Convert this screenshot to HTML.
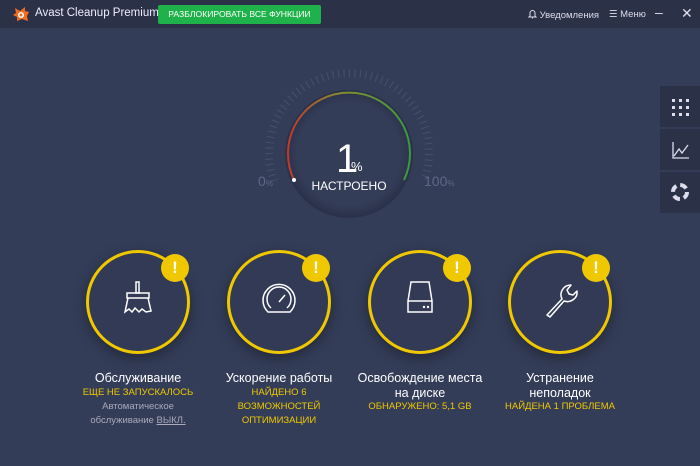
<!DOCTYPE html>
<html><head><meta charset="utf-8"><style>
*{margin:0;padding:0;box-sizing:border-box}
body{width:700px;height:466px;overflow:hidden;background:#343d58;font-family:"Liberation Sans",sans-serif;position:relative;color:#fff}
.hdr{position:absolute;left:0;top:0;width:700px;height:28px;background:#2b3146}
.logo{position:absolute;left:12px;top:6px}
.title{position:absolute;left:35px;top:7px;font-size:11.5px;color:#eef;white-space:nowrap}
.btn{position:absolute;left:158px;top:5px;width:163px;height:19px;background:#1fb24a;border-radius:2px;font-size:8.6px;color:#fff;text-align:center;line-height:19px;white-space:nowrap}
.r{position:absolute;top:9px;font-size:9.5px;color:#dde;white-space:nowrap}
.side{position:absolute;left:660px;width:40px;height:41px;background:#2b3147}
.c{position:absolute;width:104px;height:104px;border-radius:50%;border:3px solid #f0c800;background:#323a55;box-shadow:0 4px 14px rgba(0,0,0,.35)}
.b{position:absolute;width:28px;height:28px;border-radius:50%;background:#f0c800;color:#fff;font-weight:bold;font-size:17px;text-align:center;line-height:28px}
.t{position:absolute;width:160px;text-align:center;font-size:12.5px;line-height:15px;color:#fff}
.y{color:#f0c800;font-size:9.5px;line-height:14px}
.g{color:#aab;font-size:9.5px;line-height:14px}
</style></head><body>
<div class="hdr">
<svg class="logo" width="18" height="16" viewBox="0 0 18 16"><path d="M3 2 L8 5 L13 1 L13 5 L17 6 L15 10 L16 15 L10 13 L5 15 L5 11 L1 9 L4 7Z" fill="#f26b21"/><circle cx="9" cy="9" r="3" fill="#fff"/><circle cx="9" cy="9" r="1.5" fill="#f26b21"/></svg>
<div class="title">Avast Cleanup Premium</div>
<div class="btn">РАЗБЛОКИРОВАТЬ ВСЕ ФУНКЦИИ</div>
<div class="r" style="left:528px"><svg width="9" height="10" style="vertical-align:-1px"><path d="M2 7 V4 A2.5 2.5 0 0 1 7 4 V7 L8 8 H1 Z M4 9 H5" stroke="#dde" fill="none"/></svg> Уведомления</div>
<div class="r" style="left:609px">☰ Меню</div>
<div class="r" style="left:655px;top:4px;font-size:14px">–</div>
<div class="r" style="left:681px;top:5px;font-size:14px">✕</div>
</div>
<div class="side" style="top:86px"><svg width="40" height="41"><g fill="#dde"><rect x="12" y="13" width="3" height="3"/><rect x="19" y="13" width="3" height="3"/><rect x="26" y="13" width="3" height="3"/><rect x="12" y="20" width="3" height="3"/><rect x="19" y="20" width="3" height="3"/><rect x="26" y="20" width="3" height="3"/><rect x="12" y="27" width="3" height="3"/><rect x="19" y="27" width="3" height="3"/><rect x="26" y="27" width="3" height="3"/></g></svg></div>
<div class="side" style="top:129px"><svg width="40" height="41"><path d="M13 13 V29 H29 M14 27 L19 20 L22 24 L28 16" stroke="#dde" stroke-width="1.3" fill="none"/></svg></div>
<div class="side" style="top:172px"><svg width="40" height="41"><circle cx="20" cy="20" r="7" stroke="#dde" stroke-width="4" fill="none" stroke-dasharray="7 4"/></svg></div>

<svg style="position:absolute;left:0;top:0" width="700" height="240">
<defs><linearGradient id="ag" x1="0" x2="1"><stop offset="0" stop-color="#c0392b"/><stop offset=".4" stop-color="#8a8a30"/><stop offset="1" stop-color="#3a9a40"/></linearGradient>
<radialGradient id="ig"><stop offset=".8" stop-color="#343d58"/><stop offset="1" stop-color="#2a3049"/></radialGradient></defs>
<circle cx="349" cy="154" r="64" fill="url(#ig)"/>
<path d="M274 181 A80 80 0 1 1 424 181" fill="none" stroke="#46506d" stroke-width="8" stroke-dasharray="1 4.5"/>
<path d="M294 180 A61 61 0 1 1 404 180" stroke="url(#ag)" stroke-width="2" fill="none"/>
<circle cx="294" cy="180" r="2" fill="#fff"/>
<text x="336" y="172" font-size="40" fill="#fff" font-family="Liberation Sans">1</text>
<text x="351" y="171" font-size="13" fill="#fff" font-family="Liberation Sans">%</text>
<text x="349" y="190" font-size="12" fill="#fff" text-anchor="middle" font-family="Liberation Sans">НАСТРОЕНО</text>
<text x="258" y="186" font-size="14" fill="#5d6788" font-family="Liberation Sans">0<tspan font-size="8">%</tspan></text>
<text x="424" y="186" font-size="14" fill="#5d6788" font-family="Liberation Sans">100<tspan font-size="8">%</tspan></text>
</svg>

<div class="c" style="left:86px;top:250px"><svg width="98" height="98"><g stroke="#fff" stroke-width="1.5" fill="none"><rect x="47" y="29" width="3" height="11"/><rect x="38" y="40" width="22" height="5"/><path d="M39 45 L36 59 L40 56 L43 59 L46 55 L50 59 L53 56 L57 59 L62 58 L59 45"/></g></svg></div>
<div class="b" style="left:161px;top:254px">!</div>
<div class="c" style="left:227px;top:250px"><svg width="98" height="98"><g stroke="#fff" stroke-width="1.5" fill="none"><path d="M38 59 A16 16 0 1 1 60 59 Z"/><path d="M41 55 A12 12 0 1 1 57 55"/><path d="M49 49 L55 42"/></g></svg></div>
<div class="b" style="left:302px;top:254px">!</div>
<div class="c" style="left:368px;top:250px"><svg width="98" height="98"><g stroke="#fff" stroke-width="1.5" fill="none"><path d="M37 48 L40 29 H58 L61 48 Z M37 48 V59 H61 V48"/></g><circle cx="53" cy="54" r="1.2" fill="#fff"/><circle cx="57" cy="54" r="1.2" fill="#fff"/></svg></div>
<div class="b" style="left:443px;top:254px">!</div>
<div class="c" style="left:508px;top:250px"><svg width="98" height="98"><path d="M36 62 L51 46 C48 40 52 32 60 32 L56 37 L58 41 L62 42 L66 38 C67 46 59 50 53 48 L39 64 Z" stroke="#fff" stroke-width="1.5" fill="none" stroke-linejoin="round"/></svg></div>
<div class="b" style="left:582px;top:254px">!</div>

<div class="t" style="left:58px;top:371px">Обслуживание</div>
<div class="t y" style="left:58px;top:386px">ЕЩЕ НЕ ЗАПУСКАЛОСЬ</div>
<div class="t g" style="left:58px;top:400px">Автоматическое<br>обслуживание <u>ВЫКЛ.</u></div>
<div class="t" style="left:199px;top:371px">Ускорение работы</div>
<div class="t y" style="left:199px;top:386px">НАЙДЕНО 6<br>ВОЗМОЖНОСТЕЙ<br>ОПТИМИЗАЦИИ</div>
<div class="t" style="left:340px;top:371px">Освобождение места<br>на диске</div>
<div class="t y" style="left:340px;top:400px">ОБНАРУЖЕНО: 5,1 GB</div>
<div class="t" style="left:480px;top:371px">Устранение<br>неполадок</div>
<div class="t y" style="left:480px;top:400px">НАЙДЕНА 1 ПРОБЛЕМА</div>
</body></html>
